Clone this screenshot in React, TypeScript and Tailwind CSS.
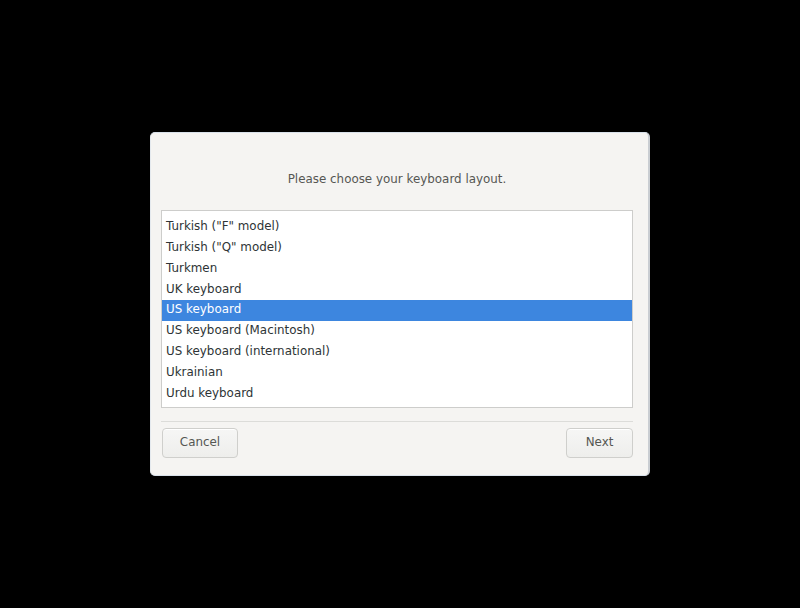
const layouts = [
  'Turkish (Alt-Q)',
  'Turkish ("F" model)',
  'Turkish ("Q" model)',
  'Turkmen',
  'UK keyboard',
  'US keyboard',
  'US keyboard (Macintosh)',
  'US keyboard (international)',
  'Ukrainian',
  'Urdu keyboard',
]

const selected = 'US keyboard'

const App = () => {
  return (
    <div className="w-[800px] h-[608px] bg-black flex items-center justify-center font-['DejaVu_Sans',sans-serif]">
      <div className="w-[500px] h-[344px] bg-[#f5f4f2] rounded-[5px] border border-[#d9e1ea] border-l-[#e4e9ee] border-r-2 border-r-[#c9cdd2] flex flex-col pl-[10px] pr-[15px] pb-[16px]">
        <div className="h-[77px] flex items-center justify-center pt-[17px] text-[11.9px] text-[#555753]">
          Please choose your keyboard layout.
        </div>
        <div className="h-[198px] bg-white border border-[#cdcdcb] overflow-hidden">
          <div className="-mt-[15.5px]">
            {layouts.map((l) => (
              <div
                key={l}
                className={
                  l === selected
                    ? 'h-[20.875px] flex items-center pl-[4px] text-[11.9px] bg-[#3d86df] text-white'
                    : 'h-[20.875px] flex items-center pl-[4px] text-[11.9px] text-[#2e3436]'
                }
              >
                {l}
              </div>
            ))}
          </div>
        </div>
        <div className="mt-[13px] border-t border-[#dcdcd9] pt-[6px] flex justify-between">
          <button className="ml-[1px] w-[76px] h-[30px] rounded-[4px] border border-[#cfcfcc] bg-gradient-to-b from-[#f6f6f5] to-[#eeeeec] text-[11.9px] text-[#555753] shadow-[inset_0_1px_0_white]">
            Cancel
          </button>
          <button className="w-[67px] h-[30px] rounded-[4px] border border-[#cfcfcc] bg-gradient-to-b from-[#f6f6f5] to-[#eeeeec] text-[11.9px] text-[#555753] shadow-[inset_0_1px_0_white]">
            Next
          </button>
        </div>
      </div>
    </div>
  )
}

export default App
